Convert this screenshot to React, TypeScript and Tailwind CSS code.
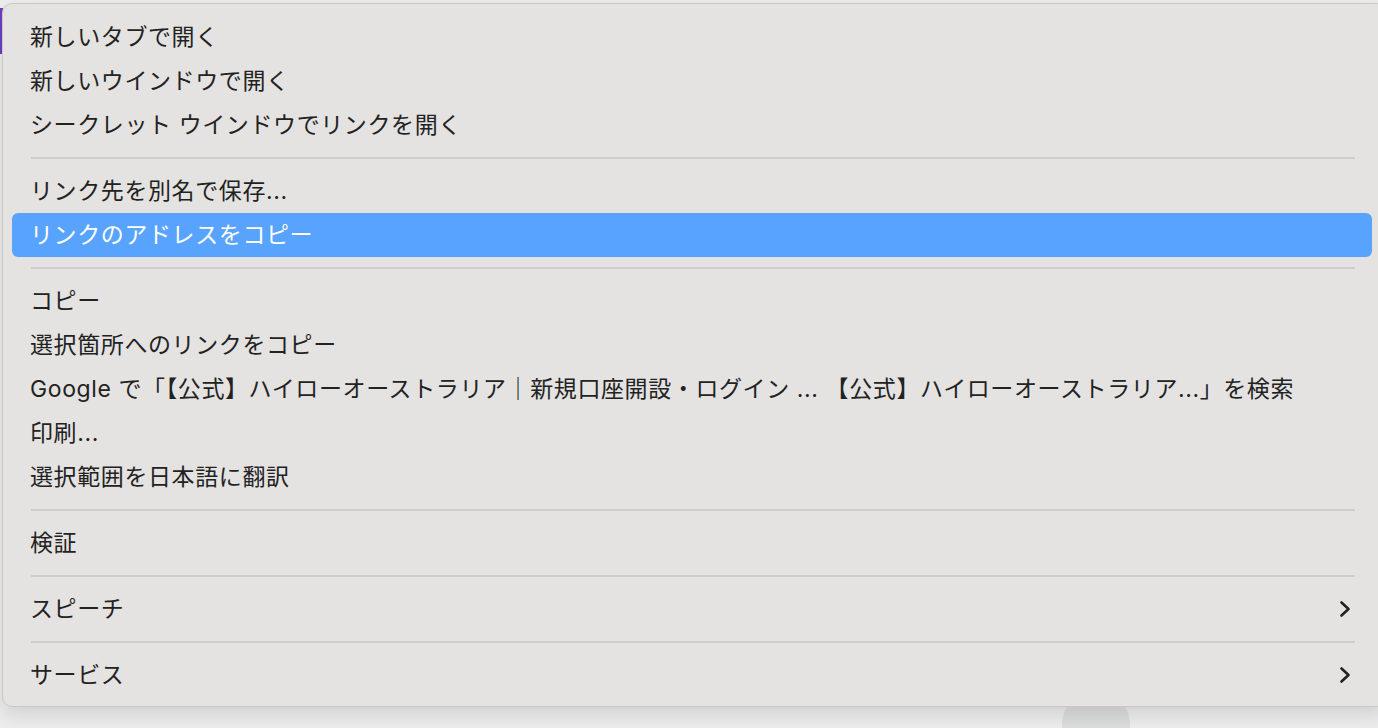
import React from "react";

type Item =
  | { type: "item"; label: string; highlight?: boolean; submenu?: boolean }
  | { type: "sep" };

const items: Item[] = [
  { type: "item", label: "新しいタブで開く" },
  { type: "item", label: "新しいウインドウで開く" },
  { type: "item", label: "シークレット ウインドウでリンクを開く" },
  { type: "sep" },
  { type: "item", label: "リンク先を別名で保存..." },
  { type: "item", label: "リンクのアドレスをコピー", highlight: true },
  { type: "sep" },
  { type: "item", label: "コピー" },
  { type: "item", label: "選択箇所へのリンクをコピー" },
  {
    type: "item",
    label:
      "Google で「【公式】ハイローオーストラリア｜新規口座開設・ログイン ... 【公式】ハイローオーストラリア...」を検索",
  },
  { type: "item", label: "印刷..." },
  { type: "item", label: "選択範囲を日本語に翻訳" },
  { type: "sep" },
  { type: "item", label: "検証" },
  { type: "sep" },
  { type: "item", label: "スピーチ", submenu: true },
  { type: "sep" },
  { type: "item", label: "サービス", submenu: true },
];

function Chevron() {
  return (
    <svg width="14" height="18" viewBox="0 0 14 18" fill="none">
      <path
        d="M3.5 2.5 L10.5 9 L3.5 15.5"
        stroke="#222"
        strokeWidth="2.6"
        strokeLinecap="round"
        strokeLinejoin="round"
      />
    </svg>
  );
}

export default function App() {
  return (
    <div
      className="relative w-[1378px] h-[728px] overflow-hidden bg-[#ededed]"
      style={{ fontFamily: '"Inter", "Noto Sans CJK JP", sans-serif' }}
    >
      <div className="absolute left-0 top-[8px] w-[3px] h-[46px] bg-[#6b3fc4]" />
      <div className="absolute left-[1062px] top-[690px] w-[68px] h-[68px] rounded-full bg-[#dcdddd]" />
      <div className="absolute left-[2px] top-[3px] w-[1385px] h-[704px] rounded-[10px] bg-[#e4e3e1] border border-[#c9c8c6] shadow-[0_8px_20px_rgba(0,0,0,0.12)] pt-[11px] pl-[9px] pr-[15px]">
        {items.map((it, i) =>
          it.type === "sep" ? (
            <div key={i} className="h-[22px] flex items-center pl-[19px] pr-[8px]">
              <div className="h-[2px] w-[1324px] bg-[#cfcecc]" />
            </div>
          ) : (
            <div
              key={i}
              className={
                "h-[44px] w-[1360px] flex items-center justify-between pl-[18px] pr-[20px] rounded-[6px] text-[23px] tracking-[0.6px] " +
                (it.highlight ? "bg-[#58a3fe] text-white" : "text-[#222222]")
              }
            >
              <span className="whitespace-nowrap">{it.label}</span>
              {it.submenu && <Chevron />}
            </div>
          )
        )}
      </div>
    </div>
  );
}
